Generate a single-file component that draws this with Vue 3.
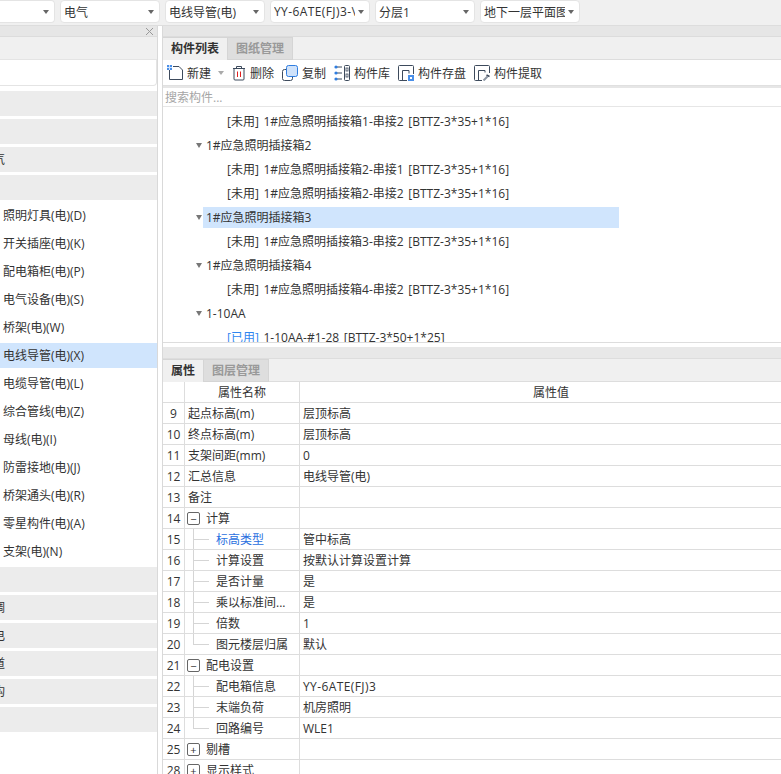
<script setup>
const combos = [
  { t: '', w: 55, cls: 'first' },
  { t: '电气', w: 100 },
  { t: '电线导管(电)', w: 100 },
  { t: 'YY-6ATE(FJ)3-\\', w: 100, cls: 'latin' },
  { t: '分层1', w: 100 },
  { t: '地下一层平面图', w: 100 },
]
const groups1 = ['', '', '气', '']
const items = ['照明灯具(电)(D)', '开关插座(电)(K)', '配电箱柜(电)(P)', '电气设备(电)(S)', '桥架(电)(W)', '电线导管(电)(X)', '电缆导管(电)(L)', '综合管线(电)(Z)', '母线(电)(I)', '防雷接地(电)(J)', '桥架通头(电)(R)', '零星构件(电)(A)', '支架(电)(N)']
const groups2 = ['', '调', '电', '道', '构', '']
const tree = [
  { t: '[未用] 1#应急照明插接箱1-串接2 [BTTZ-3*35+1*16]', k: 'c' },
  { t: '1#应急照明插接箱2', k: 'p' },
  { t: '[未用] 1#应急照明插接箱2-串接1 [BTTZ-3*35+1*16]', k: 'c' },
  { t: '[未用] 1#应急照明插接箱2-串接2 [BTTZ-3*35+1*16]', k: 'c' },
  { t: '1#应急照明插接箱3', k: 'p', sel: true },
  { t: '[未用] 1#应急照明插接箱3-串接2 [BTTZ-3*35+1*16]', k: 'c' },
  { t: '1#应急照明插接箱4', k: 'p' },
  { t: '[未用] 1#应急照明插接箱4-串接2 [BTTZ-3*35+1*16]', k: 'c' },
  { t: '1-10AA', k: 'p' },
  { t: ' 1-10AA-#1-28 [BTTZ-3*50+1*25]', k: 'c', used: true },
]
const rows = [
  { n: 9, a: '起点标高(m)', v: '层顶标高' },
  { n: 10, a: '终点标高(m)', v: '层顶标高' },
  { n: 11, a: '支架间距(mm)', v: '0' },
  { n: 12, a: '汇总信息', v: '电线导管(电)' },
  { n: 13, a: '备注', v: '' },
  { n: 14, a: '计算', v: '', g: '−' },
  { n: 15, a: '标高类型', v: '管中标高', c: 1, blue: true },
  { n: 16, a: '计算设置', v: '按默认计算设置计算', c: 1 },
  { n: 17, a: '是否计量', v: '是', c: 1 },
  { n: 18, a: '乘以标准间...', v: '是', c: 1 },
  { n: 19, a: '倍数', v: '1', c: 1 },
  { n: 20, a: '图元楼层归属', v: '默认', c: 1, last: true },
  { n: 21, a: '配电设置', v: '', g: '−' },
  { n: 22, a: '配电箱信息', v: 'YY-6ATE(FJ)3', c: 1, latin: true },
  { n: 23, a: '末端负荷', v: '机房照明', c: 1 },
  { n: 24, a: '回路编号', v: 'WLE1', c: 1, last: true },
  { n: 25, a: '剔槽', v: '', g: '+' },
  { n: 28, a: '显示样式', v: '', g: '+' },
]
</script>

<template>
  <div class="app">
    <header class="topbar">
      <div v-for="(c, i) in combos" :key="i" class="combo" :class="c.cls" :style="{ width: c.w + 'px' }">
        <span class="combo-text">{{ c.t }}</span>
        <i class="caret"></i>
      </div>
    </header>
    <div class="main">
      <aside class="left">
        <div class="strip">
          <svg class="close" width="7" height="7" viewBox="0 0 7 7"><path d="M0 0l7 7M7 0l-7 7" stroke="#999" stroke-width="1"/></svg>
        </div>
        <div class="left-tabs"></div>
        <div class="left-input"></div>
        <div class="nav">
          <div v-for="(g, i) in groups1" :key="'a' + i" class="nav-group"><span class="clip"><span>{{ g }}</span></span></div>
          <div v-for="it in items" :key="it" class="nav-item" :class="{ on: it.startsWith('电线导管') }">{{ it }}</div>
          <div v-for="(g, i) in groups2" :key="'b' + i" class="nav-group"><span class="clip"><span>{{ g }}</span></span></div>
        </div>
      </aside>
      <section class="right">
        <div class="strip"></div>
        <div class="tabs">
          <div class="tab active">构件列表</div>
          <div class="tab">图纸管理</div>
        </div>
        <div class="toolbar">
          <div class="tool">
            <svg width="16" height="16" viewBox="0 0 16 16"><path d="M2.5 5v9.5h13V5l-3.5-3.5H6" fill="#fff" stroke="#3d4a5c"/><rect x="0" y="0" width="5" height="5" fill="#4a8fe8"/><path d="M0 2.5h5M2.5 0v5" stroke="#cfe2fa"/></svg>
            <span>新建</span>
            <i class="caret tool-caret"></i>
          </div>
          <div class="tool">
            <svg width="14" height="16" viewBox="0 0 14 16"><path d="M1 3.5h12M4.5 3V1.5h5V3" fill="none" stroke="#3d4a5c"/><path d="M2 3.5v10.5a1 1 0 0 0 1 1h8a1 1 0 0 0 1-1V3.5" fill="none" stroke="#3d4a5c"/><path d="M5.5 6.5v5.5M8.5 6.5v5.5" stroke="#e02020"/></svg>
            <span>删除</span>
          </div>
          <div class="tool">
            <svg width="16" height="16" viewBox="0 0 16 16"><rect x="0.5" y="4.5" width="10" height="11" rx="2" fill="#fff" stroke="#3d4a5c"/><rect x="4.5" y="0.5" width="11" height="11" rx="2" fill="#cfe2fa" stroke="#2f7de0"/></svg>
            <span>复制</span>
          </div>
          <div class="tool">
            <svg width="16" height="16" viewBox="0 0 16 16"><rect x="10.5" y="0.5" width="5" height="15" rx="1" fill="#fff" stroke="#3d4a5c"/><rect x="12" y="3" width="2" height="3" fill="none" stroke="#3d4a5c" stroke-width=".8"/><rect x="12" y="9" width="2" height="3" fill="none" stroke="#3d4a5c" stroke-width=".8"/><path d="M2 2h6M3 8h5M2 14h6" stroke="#3d4a5c"/><circle cx="2" cy="2" r="1.6" fill="#2f7de0"/><circle cx="2" cy="8" r="1.6" fill="#2f7de0"/><circle cx="2" cy="14" r="1.6" fill="#2f7de0"/></svg>
            <span>构件库</span>
          </div>
          <div class="tool">
            <svg width="16" height="16" viewBox="0 0 16 16"><path d="M9 15.5H1.5a1 1 0 0 1-1-1v-13a1 1 0 0 1 1-1h13a1 1 0 0 1 1 1V9" fill="none" stroke="#3d4a5c"/><path d="M4.5 15V5.5H11v3" fill="none" stroke="#3d4a5c"/><rect x="10" y="10" width="6" height="6" fill="#4a8fe8"/><rect x="12" y="12" width="2" height="2" fill="#fff"/></svg>
            <span>构件存盘</span>
          </div>
          <div class="tool">
            <svg width="16" height="16" viewBox="0 0 16 16"><path d="M8 15.5H1.5a1 1 0 0 1-1-1v-13a1 1 0 0 1 1-1h13a1 1 0 0 1 1 1V8" fill="none" stroke="#3d4a5c"/><path d="M4.5 15V5.5H11v2" fill="none" stroke="#3d4a5c"/><path d="M9.5 15.5l4-4" stroke="#8d96a3" stroke-width="2"/><path d="M12.5 10l3 1.5" stroke="#3d4a5c" stroke-width="1.5"/></svg>
            <span>构件提取</span>
          </div>
        </div>
        <div class="search">搜索构件...</div>
        <div class="tree">
          <div v-for="(n, i) in tree" :key="i" class="node" :class="n.k">
            <i v-if="n.k === 'p'" class="caret tree-caret"></i>
            <div class="node-in" :class="{ sel: n.sel }">
              <span v-if="n.used" class="used">[已用]</span><span>{{ n.t }}</span>
            </div>
          </div>
        </div>
        <div class="splitter"></div>
        <div class="tabs lower">
          <div class="tab active">属性</div>
          <div class="tab">图层管理</div>
        </div>
        <div class="table">
          <div class="row head">
            <div class="c-n"></div>
            <div class="c-a">属性名称</div>
            <div class="c-v">属性值</div>
          </div>
          <div v-for="r in rows" :key="r.n" class="row">
            <div class="c-n">{{ r.n }}</div>
            <div class="c-a" :class="{ child: r.c, last: r.last, group: r.g }">
              <span v-if="r.g" class="box">{{ r.g }}</span>
              <span :class="{ blue: r.blue }">{{ r.a }}</span>
            </div>
            <div class="c-v" :class="{ latin: r.latin }">{{ r.v }}</div>
          </div>
        </div>
      </section>
    </div>
  </div>
</template>

<style>
html, body { margin: 0; background: #fff; }
</style>

<style scoped>
.app {
  width: 781px; height: 774px; overflow: hidden; display: flex; flex-direction: column;
  font-family: "Open Sans", "Noto Sans CJK SC", sans-serif; font-size: 12px; color: #333; background: #fff;
}
.latin { letter-spacing: .4px; }
.topbar { height: 26px; flex: none; background: #f0f0f0; display: flex; gap: 5px; box-sizing: border-box; border-bottom: 1px solid #ddd; }
.combo {
  height: 23px; box-sizing: border-box; background: #fff; border: 1px solid #e4e4e4; border-radius: 4px;
  display: flex; align-items: center; padding: 0 5px 0 3px; overflow: hidden; white-space: nowrap;
}
.combo.first { border-left: 0; border-radius: 0 4px 4px 0; }
.combo-text { overflow: hidden; flex: 1; min-width: 0; }
.combo .caret { margin-left: 3px; }
.caret { flex: none; width: 0; height: 0; border: 3px solid transparent; border-top: 4px solid #666; border-bottom: 0; display: inline-block; }
.main { flex: 1; min-height: 0; display: flex; }
.left { width: 157px; flex: none; border-right: 1px solid #d9d9d9; overflow: hidden; display: flex; flex-direction: column; }
.strip { height: 11px; flex: none; box-sizing: border-box; background: #e6e6e6; border-bottom: 1px solid #dcdcdc; position: relative; }
.close { position: absolute; right: 4px; top: 2px; }
.left-tabs { height: 22px; flex: none; background: #f0f0f0; }
.left-input { height: 27px; flex: none; box-sizing: border-box; background: #fff; border: 1px solid #e4e4e4; border-left: 0; border-radius: 0 0 4px 0; }
.nav { flex: 1; padding-top: 5px; display: flex; flex-direction: column; gap: 3px; }
.nav-group { height: 25px; flex: none; background: #ececec; line-height: 25px; }
.clip { display: flex; width: 5px; justify-content: flex-end; white-space: nowrap; }
.nav-item { height: 25px; flex: none; line-height: 25px; padding-left: 3px; }
.nav-item.on { background: #d0e5fd; }
.right { flex: 1; min-width: 0; margin-left: 4px; border-left: 1px solid #d9d9d9; display: flex; flex-direction: column; overflow: hidden; }
.tabs { height: 23px; flex: none; background: #f0f0f0; display: flex; box-sizing: border-box; border-bottom: 1px solid #ddd; }
.tab { width: 65px; box-sizing: border-box; text-align: center; line-height: 21px; height: 23px; border: 1px solid #d5d5d5; border-left: 0; background: #dedede; color: #999; font-weight: 700; }
.tab.active { background: #f0f0f0; color: #333; border-bottom: 0; }
.tabs.lower .tab.active { width: 41px; }
.toolbar { height: 26px; flex: none; display: flex; align-items: center; gap: 8px; padding-left: 4px; box-sizing: border-box; border-bottom: 1px solid #e0e0e0; }
.tool { display: flex; align-items: center; gap: 4px; height: 16px; }
.tool-caret { margin-left: 3px; border-top-color: #aaa; }
.search { height: 21px; flex: none; color: #a6a6a6; padding-left: 2px; box-sizing: border-box; border-top: 2px solid #e6e6e6; border-bottom: 1px solid #e6e6e6; line-height: 20px; overflow: hidden; }
.tree { height: 236px; flex: none; overflow: hidden; padding-top: 2px; box-sizing: border-box; border-bottom: 1px solid #ddd; }
.node { height: 24px; display: flex; align-items: center; white-space: nowrap; word-spacing: 1.5px; }
.node.c { padding-left: 64px; }
.node.p { padding-left: 33px; }
.node-in { display: flex; align-items: center; height: 21px; white-space: pre; }
.node.p .node-in { width: 416px; margin-left: 1px; padding-left: 3px; box-sizing: border-box; }
.tree-caret { border-width: 5px 3.5px 0; border-style: solid; border-color: #777 transparent transparent; }
.node-in.sel { background: #d0e5fd; }
.used { color: #2e86f0; }
.splitter { height: 16px; flex: none; box-sizing: border-box; background: #e8e8e8; border-top: 4px solid #fff; border-bottom: 1px solid #ddd; }
.table { flex: 1; }
.row { height: 21px; box-sizing: border-box; display: flex; border-bottom: 1px solid #ddd; line-height: 21px; white-space: nowrap; }
.c-n { width: 22px; flex: none; box-sizing: border-box; text-align: center; border-right: 1px solid #ddd; }
.c-a { width: 115px; flex: none; box-sizing: border-box; padding-left: 3px; border-right: 1px solid #ddd; position: relative; display: flex; align-items: center; overflow: hidden; }
.c-v { flex: 1; padding-left: 3px; }
.head .c-a { justify-content: center; padding-left: 0; }
.head .c-v { text-align: center; padding-left: 21px; }
.child { padding-left: 31px; }
.child::before { content: ""; position: absolute; left: 8px; top: -1px; bottom: 0; border-left: 1px solid #d5d5d5; }
.child.last::before { bottom: 9px; }
.child::after { content: ""; position: absolute; left: 8px; top: 10px; width: 16px; border-top: 1px solid #d5d5d5; }
.box { width: 13px; height: 13px; box-sizing: border-box; border: 1px solid #666; border-radius: 2px; margin: 0 6px 0 -1px; display: flex; align-items: center; justify-content: center; line-height: 11px; font-size: 11px; flex: none; }
.blue { color: #2a6fe0; }
</style>
